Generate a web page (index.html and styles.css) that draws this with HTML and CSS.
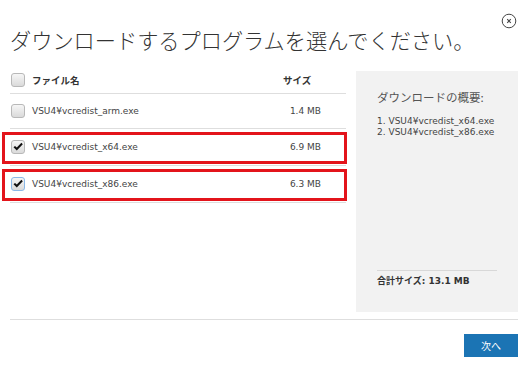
FILE: index.html
```
<!DOCTYPE html>
<html lang="ja">
<head>
    <meta charset="UTF-8">
    <meta name="viewport" content="width=device-width, initial-scale=1.0">
    <title>ダウンロード</title>
    <link rel="stylesheet" href="styles.css">
</head>
<body>
    <div class="dialog">
        <button class="close" aria-label="閉じる">
            <svg width="16" height="16" viewBox="0 0 16 16">
                <circle cx="8" cy="8" r="6.8" fill="none" stroke="#444" stroke-width="1"/>
                <path d="M6.2 6.2 L9.8 9.8 M9.8 6.2 L6.2 9.8" stroke="#444" stroke-width="1.1"/>
            </svg>
        </button>

        <h1 class="title">ダウンロードするプログラムを選んでください。</h1>

        <div class="main">
            <div class="files">
                <div class="row head">
                    <span class="check"></span>
                    <span class="name">ファイル名</span>
                    <span class="size">サイズ</span>
                </div>
                <div class="row">
                    <span class="check"></span>
                    <span class="name">VSU4¥vcredist_arm.exe</span>
                    <span class="size">1.4 MB</span>
                </div>
                <div class="row marked">
                    <span class="check on">
                        <svg width="12" height="12" viewBox="0 0 12 12"><path d="M1.5 6.3 L3 4.9 L4.8 6.6 L9.4 1.8 L10.8 3.2 L4.8 9.6 Z" fill="#111"/></svg>
                    </span>
                    <span class="name">VSU4¥vcredist_x64.exe</span>
                    <span class="size">6.9 MB</span>
                </div>
                <div class="row marked">
                    <span class="check on focus">
                        <svg width="12" height="12" viewBox="0 0 12 12"><path d="M1.5 6.3 L3 4.9 L4.8 6.6 L9.4 1.8 L10.8 3.2 L4.8 9.6 Z" fill="#111"/></svg>
                    </span>
                    <span class="name">VSU4¥vcredist_x86.exe</span>
                    <span class="size">6.3 MB</span>
                </div>
            </div>

            <div class="summary">
                <h2>ダウンロードの概要:</h2>
                <ol>
                    <li>VSU4¥vcredist_x64.exe</li>
                    <li>VSU4¥vcredist_x86.exe</li>
                </ol>
                <div class="total">合計サイズ: 13.1 MB</div>
            </div>
        </div>

        <div class="footer">
            <button class="next">次へ</button>
        </div>
    </div>
</body>
</html>
```
FILE: styles.css
```
body {
    margin: 0;
    background-color: white;
    font-family: "DejaVu Sans", "Noto Sans CJK JP", sans-serif;
    color: #333;
}
.dialog {
    position: relative;
    width: 508px;
    padding: 26px 11px 0 10px;
}
.close {
    position: absolute;
    top: 13px;
    right: 12px;
    padding: 0;
    border: none;
    background: none;
    line-height: 0;
}
.title {
    margin: 0;
    font-family: "Noto Sans CJK JP", sans-serif;
    font-size: 21.2px;
    font-weight: 300;
    line-height: 27px;
    color: #333;
    white-space: nowrap;
}
.main {
    display: flex;
    gap: 10px;
    margin-top: 18px;
}
.files {
    width: 336px;
}
.row {
    position: relative;
    display: flex;
    align-items: center;
    height: 34px;
    border-bottom: 1px solid #dedede;
    font-size: 9px;
    color: #444;
}
.row.head {
    align-items: flex-start;
    height: auto;
    padding: 2px 0 6px;
    font-weight: bold;
    color: #333;
}
.row.marked {
    height: 36px;
}
.row.marked::after {
    content: "";
    position: absolute;
    top: 3px;
    bottom: 1px;
    left: -8px;
    right: -1px;
    border: 3px solid #e3141b;
}
.check {
    display: flex;
    align-items: center;
    justify-content: center;
    box-sizing: border-box;
    width: 14px;
    height: 14px;
    margin-left: 1px;
    border: 1px solid #b8b8b8;
    border-radius: 3px;
    background: linear-gradient(#f6f6f6, #dadada);
}
.check.focus {
    border-color: #8ab8e8;
}
.name {
    flex: 1;
    margin-left: 7px;
}
.head .name, .head .size {
    font-family: "Noto Sans CJK JP", sans-serif;
    font-size: 9.5px;
    line-height: 14px;
}
.size {
    width: 38px;
    margin-right: 25px;
    text-align: right;
}
.head .size {
    text-align: left;
}
.summary {
    display: flex;
    flex-direction: column;
    box-sizing: border-box;
    width: 162px;
    height: 241px;
    padding: 18px 21px 24px;
    background-color: #f2f2f2;
    color: #444;
}
.summary h2 {
    margin: 0;
    font-family: "Noto Sans CJK JP", sans-serif;
    font-size: 11.5px;
    font-weight: normal;
    line-height: 16px;
    color: #555;
}
.summary ol {
    margin: 11px 0 0;
    padding: 0;
    list-style: none;
    font-size: 9px;
    line-height: 11px;
    counter-reset: item;
}
.summary li::before {
    counter-increment: item;
    content: counter(item) ". ";
}
.total {
    margin-top: auto;
    padding-top: 3px;
    border-top: 1px solid #d8d8d8;
    font-size: 9px;
    font-weight: bold;
    line-height: 14px;
    color: #333;
}
.footer {
    display: flex;
    justify-content: flex-end;
    margin-top: 7px;
    padding-top: 14px;
    border-top: 1px solid #dedede;
}
.next {
    width: 54px;
    height: 23px;
    border: none;
    background-color: #1b74b4;
    color: white;
    font-family: "Noto Sans CJK JP", sans-serif;
    font-size: 10px;
    cursor: pointer;
}
```
